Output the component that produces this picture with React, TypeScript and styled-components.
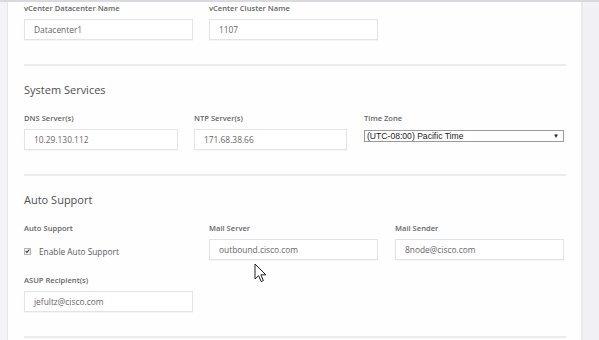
import React from "react";
import styled, { createGlobalStyle } from "styled-components";

const Global = createGlobalStyle`
  html, body { margin: 0; padding: 0; background: #ffffff; }
  body { font-family: "Open Sans", "Noto Sans", sans-serif; }
  * { box-sizing: border-box; }
`;

const Page = styled.div`
  display: flex;
  width: 599px;
  height: 340px;
  overflow: hidden;
  position: relative;
  border-top: 2px solid #d9d9de;
`;

const LeftRail = styled.div`
  width: 8px;
  flex: none;
  background: #f4f4f8;
  border-right: 1px solid #e6e6ec;
`;

const RightRail = styled.div`
  width: 18px;
  flex: none;
  background: #f1f1f5;
  border-left: 2px solid #e9e9ee;
`;

const Main = styled.div`
  flex: 1;
  background: #fefefe;
  padding: 1px 15px 0 16px;
`;

const Section = styled.section<{ $first?: boolean }>`
  padding-top: ${(p) => (p.$first ? "0" : "16px")};
  padding-bottom: 24px;
  border-bottom: 2px solid #ececef;
`;

const Heading = styled.h2`
  margin: 0 0 16px 0;
  font-size: 11px;
  line-height: 15px;
  font-weight: 400;
  color: #505050;
`;

const Row = styled.div<{ $cols: string }>`
  display: grid;
  grid-template-columns: ${(p) => p.$cols};
  align-items: start;
`;

const Field = styled.div<{ $mt?: number }>`
  display: flex;
  flex-direction: column;
  margin-top: ${(p) => p.$mt ?? 0}px;
`;

const Label = styled.div`
  font-size: 7.6px;
  line-height: 11px;
  font-weight: 600;
  color: #666;
  margin-bottom: 5px;
  white-space: nowrap;
`;

const Input = styled.div<{ $w: number }>`
  width: ${(p) => p.$w}px;
  height: 21px;
  border: 1px solid #e4e4e6;
  box-shadow: 0 1px 1px rgba(0, 0, 0, 0.03);
  background: #fff;
  padding: 0 9px;
  display: flex;
  align-items: center;
  font-size: 8.4px;
  color: #666;
  white-space: nowrap;
`;

const Select = styled.div`
  width: 200px;
  height: 12px;
  margin-top: 1px;
  border: 1px solid #9a9a9a;
  background: #fff;
  display: flex;
  align-items: center;
  justify-content: space-between;
  padding: 0 4px 0 2px;
  font-family: "Liberation Sans", Arial, sans-serif;
  font-size: 8.6px;
  color: #222;
`;

const Caret = styled.span`
  font-size: 6px;
  color: #222;
`;

const CheckRow = styled.div`
  display: flex;
  align-items: center;
  gap: 8px;
  margin-top: 6px;
  height: 12px;
  font-size: 8.3px;
  color: #5a5a5a;
`;

const Box = styled.span`
  width: 7px;
  height: 7px;
  border: 1px solid #b5b5b5;
  background: #efefef;
  display: flex;
  align-items: center;
  justify-content: center;
`;

const Cursor = styled.svg`
  position: absolute;
  left: 254px;
  top: 261px;
`;

export default function App() {
  return (
    <>
      <Global />
      <Page>
        <LeftRail />
        <Main>
          <Section $first>
            <Row $cols="185px 185px 1fr">
              <Field>
                <Label>vCenter Datacenter Name</Label>
                <Input $w={169}>Datacenter1</Input>
              </Field>
              <Field>
                <Label>vCenter Cluster Name</Label>
                <Input $w={169}>1107</Input>
              </Field>
            </Row>
          </Section>
          <Section>
            <Heading>System Services</Heading>
            <Row $cols="170px 170px 1fr">
              <Field>
                <Label>DNS Server(s)</Label>
                <Input $w={154}>10.29.130.112</Input>
              </Field>
              <Field>
                <Label>NTP Server(s)</Label>
                <Input $w={153}>171.68.38.66</Input>
              </Field>
              <Field>
                <Label>Time Zone</Label>
                <Select>
                  <span>(UTC-08:00) Pacific Time</span>
                  <Caret>▼</Caret>
                </Select>
              </Field>
            </Row>
          </Section>
          <Section>
            <Heading>Auto Support</Heading>
            <Row $cols="185px 186px 1fr">
              <Field>
                <Label>Auto Support</Label>
                <CheckRow>
                  <Box>
                    <svg width="6" height="6" viewBox="0 0 6 6">
                      <path d="M0.8 3.2 L2.4 4.8 L5.2 1.2" fill="none" stroke="#333" strokeWidth="1.3" />
                    </svg>
                  </Box>
                  Enable Auto Support
                </CheckRow>
              </Field>
              <Field>
                <Label>Mail Server</Label>
                <Input $w={169}>outbound.cisco.com</Input>
              </Field>
              <Field>
                <Label>Mail Sender</Label>
                <Input $w={169}>8node@cisco.com</Input>
              </Field>
              <Field $mt={15}>
                <Label>ASUP Recipient(s)</Label>
                <Input $w={169}>jefultz@cisco.com</Input>
              </Field>
            </Row>
          </Section>
        </Main>
        <RightRail />
        <Cursor width="14" height="21" viewBox="0 0 14 21">
          <path
            d="M1 1 L1 16 L4.6 12.6 L7.2 18.6 L9.4 17.6 L6.9 11.8 L11.8 11.8 Z"
            fill="#fff"
            stroke="#222"
            strokeWidth="1"
            strokeLinejoin="round"
          />
        </Cursor>
      </Page>
    </>
  );
}
